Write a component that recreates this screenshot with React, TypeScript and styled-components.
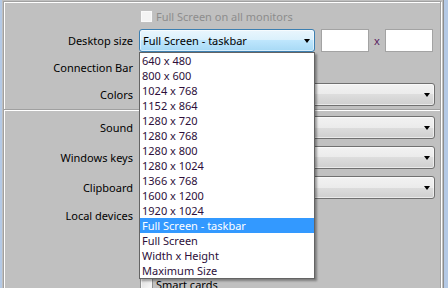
import React from "react";
import styled, { createGlobalStyle } from "styled-components";

const Global = createGlobalStyle`
  html, body { margin: 0; padding: 0; background: #b4c9e5; }
  body { font-family: "Noto Sans", "Open Sans", sans-serif; font-size: 11px; color: #000; }
  #root { width: 448px; height: 288px; }
`;

const Frame = styled.div`
  width: 448px;
  height: 288px;
  overflow: hidden;
  box-sizing: border-box;
  background: #b4c9e5;
  padding: 0 4px 0 2px;
  display: flex;
`;

const Client = styled.div`
  flex: 1;
  background: #c0c0c0;
  border-right: 1px solid #8d8d8d;
  padding: 1px 2px 0 1px;
  display: flex;
  flex-direction: column;
`;

const Group = styled.div<{ $first?: boolean; $gap: number }>`
  border: 1px solid #a0a0a0;
  ${(p) => (p.$first ? "" : "border-top: none; border-bottom: none; flex: 1;")}
  box-shadow: ${(p) => (p.$first ? "inset 1px 1px 0 #fff, 1px 1px 0 #fff" : "inset 1px 0 0 #fff, 1px 0 0 #fff")};
  padding: 6px 5px 3px 1px;
  display: flex;
  flex-direction: column;
  gap: ${(p) => p.$gap}px;
`;

const Row = styled.div<{ $h?: number; $top?: boolean }>`
  display: grid;
  grid-template-columns: 128px 1fr;
  column-gap: 6px;
  align-items: ${(p) => (p.$top ? "start" : "center")};
  ${(p) => (p.$h ? `height: ${p.$h}px;` : "")}
`;

const Label = styled.div<{ $pad?: number }>`
  grid-column: 1;
  text-align: right;
  white-space: nowrap;
  line-height: 17px;
  color: #000;
  padding-top: ${(p) => p.$pad ?? 0}px;
`;

const Controls = styled.div`
  grid-column: 2;
  display: flex;
  align-items: center;
`;

const CheckLine = styled.div<{ $disabled?: boolean }>`
  display: flex;
  align-items: center;
  gap: 3px;
  height: 17px;
  margin-left: 1px;
  color: ${(p) => (p.$disabled ? "#8d8d8d" : "#000")};
  white-space: nowrap;
`;

const Box = styled.span<{ $disabled?: boolean }>`
  width: 13px;
  height: 13px;
  box-sizing: border-box;
  border: 1px solid ${(p) => (p.$disabled ? "#c2c2c2" : "#8e8f8f")};
  background: ${(p) =>
    p.$disabled ? "#f4f4f4" : "linear-gradient(135deg, #dcdcdc 0%, #fbfbfb 100%)"};
  box-shadow: inset 0 0 0 1px ${(p) => (p.$disabled ? "#fafafa" : "#f4f4f4")};
  flex: none;
`;

const SelectWrap = styled.div`
  position: relative;
  flex: none;
`;

const SelectBox = styled.div<{ $open?: boolean; $w?: number }>`
  box-sizing: border-box;
  height: 23px;
  width: ${(p) => (p.$w ? `${p.$w}px` : "100%")};
  border: 1px solid ${(p) => (p.$open ? "#3c7fb1" : "#707070")};
  border-radius: 3px;
  background: ${(p) =>
    p.$open
      ? "linear-gradient(#eaf6fd 0%, #d9f0fc 50%, #bee6fd 50%, #a7d9f5 100%)"
      : "linear-gradient(#f2f2f2 0%, #ebebeb 50%, #dddddd 50%, #cfcfcf 100%)"};
  box-shadow: inset 0 0 0 1px rgba(255, 255, 255, 0.55);
  display: flex;
  align-items: center;
  padding: 0 4px 0 3px;
  line-height: 17px;
  white-space: nowrap;
`;

const SelectText = styled.span`
  flex: 1;
  overflow: hidden;
`;

const Arrow = styled.span`
  width: 0;
  height: 0;
  border-left: 3.5px solid transparent;
  border-right: 3.5px solid transparent;
  border-top: 4px solid #000;
  flex: none;
`;

const Input = styled.div<{ $ml?: number }>`
  box-sizing: border-box;
  width: 48px;
  height: 23px;
  margin-left: ${(p) => p.$ml ?? 0}px;
  background: #fff;
  border: 1px solid #a3a3a3;
  flex: none;
`;

const Times = styled.span`
  width: 16px;
  text-align: center;
  color: #5a2060;
  flex: none;
  line-height: 17px;
`;

const List = styled.div`
  position: absolute;
  top: 100%;
  left: 0;
  width: 176px;
  box-sizing: border-box;
  background: #fff;
  border: 1px solid #646464;
  box-shadow: 2px 2px 2px rgba(0, 0, 0, 0.35);
  z-index: 10;
  display: flex;
  flex-direction: column;
`;

const Item = styled.div<{ $sel?: boolean }>`
  height: 15px;
  line-height: 15px;
  padding-left: 2px;
  white-space: nowrap;
  color: ${(p) => (p.$sel ? "#fff" : "#2d0f3a")};
  background: ${(p) => (p.$sel ? "#3399ff" : "transparent")};
`;

const CheckColumn = styled.div`
  grid-column: 2;
  display: flex;
  flex-direction: column;
  padding-top: 70px;
`;

const sizes = [
  "640 x 480",
  "800 x 600",
  "1024 x 768",
  "1152 x 864",
  "1280 x 720",
  "1280 x 768",
  "1280 x 800",
  "1280 x 1024",
  "1366 x 768",
  "1600 x 1200",
  "1920 x 1024",
  "Full Screen - taskbar",
  "Full Screen",
  "Width x Height",
  "Maximum Size",
];

const Select: React.FC<{ text?: string }> = ({ text }) => (
  <SelectBox>
    <SelectText>{text}</SelectText>
    <Arrow />
  </SelectBox>
);

export default function App() {
  return (
    <>
      <Global />
      <Frame>
        <Client>
          <Group $first $gap={4}>
            <Row $h={17}>
              <Controls>
                <CheckLine $disabled>
                  <Box $disabled />
                  Full Screen on all monitors
                </CheckLine>
              </Controls>
            </Row>
            <Row $h={23}>
              <Label>Desktop size</Label>
              <Controls>
                <SelectWrap>
                  <SelectBox $open $w={176}>
                    <SelectText>Full Screen - taskbar</SelectText>
                    <Arrow />
                  </SelectBox>
                  <List>
                    {sizes.map((s) => (
                      <Item key={s} $sel={s === "Full Screen - taskbar"}>
                        {s}
                      </Item>
                    ))}
                  </List>
                </SelectWrap>
                <Input $ml={6} />
                <Times>x</Times>
                <Input />
              </Controls>
            </Row>
            <Row $h={23}>
              <Label>Connection Bar</Label>
            </Row>
            <Row $h={23}>
              <Label>Colors</Label>
              <Controls>
                <Select />
              </Controls>
            </Row>
          </Group>
          <Group $gap={7}>
            <Row $h={23}>
              <Label>Sound</Label>
              <Controls>
                <Select />
              </Controls>
            </Row>
            <Row $h={23}>
              <Label>Windows keys</Label>
              <Controls>
                <Select />
              </Controls>
            </Row>
            <Row $h={23}>
              <Label>Clipboard</Label>
              <Controls>
                <Select />
              </Controls>
            </Row>
            <Row $top>
              <Label $pad={1}>Local devices</Label>
              <CheckColumn>
                <CheckLine>
                  <Box />
                  Smart cards
                </CheckLine>
              </CheckColumn>
            </Row>
          </Group>
        </Client>
      </Frame>
    </>
  );
}
